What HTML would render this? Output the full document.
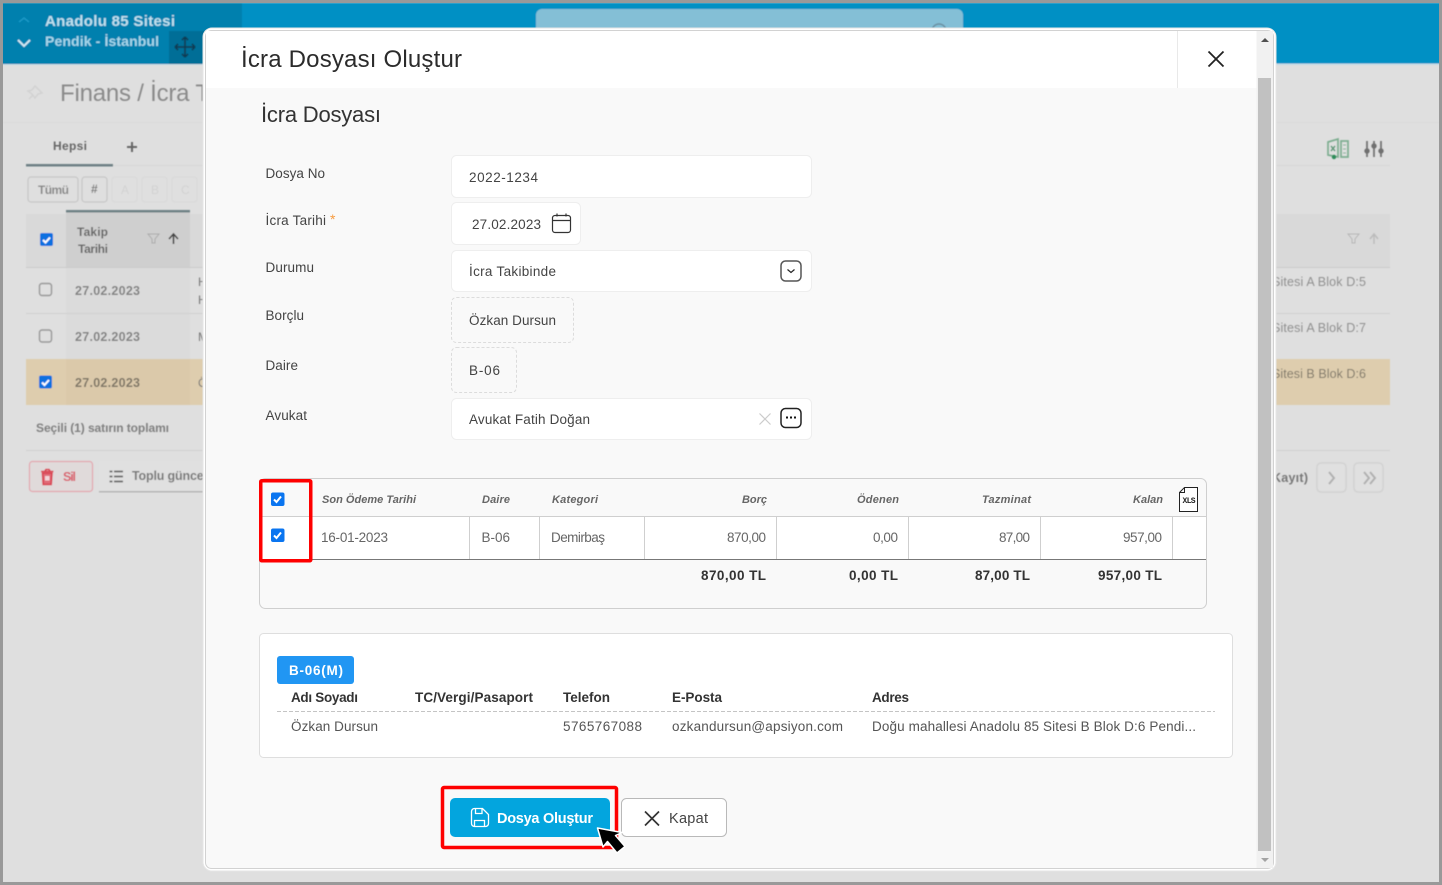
<!DOCTYPE html>
<html><head><meta charset="utf-8"><style>
html,body{margin:0;padding:0;width:1442px;height:885px;overflow:hidden;background:#dfdfdf}
svg{display:block}
text{font-family:"Liberation Sans","DejaVu Sans",sans-serif;font-size:13.5px;fill:#444}
.b{font-weight:bold}
.i{font-style:italic;font-weight:bold;font-size:11px;fill:#666}
.l{fill:#444;font-size:13.5px}
.g{fill:#666;font-size:12px;font-weight:bold}
</style></head><body>
<svg width="1442" height="885" viewBox="0 0 1442 885" xmlns="http://www.w3.org/2000/svg">
<defs><filter id="bl" x="-2%" y="-2%" width="104%" height="104%"><feGaussianBlur stdDeviation="0.6"/></filter></defs>
<rect width="1442" height="885" fill="#dfdfdf"/>
<g filter="url(#bl)">
 <rect x="0" y="3" width="1442" height="61" fill="#0090c4"/>
 <rect x="0" y="63.500" width="1442" height="1.500" fill="#c3dce6"/>
 <rect x="0" y="3" width="242" height="61" fill="#0080ae"/>
 <rect x="169" y="31" width="36" height="33" fill="#006e97"/>
 <rect x="536" y="9" width="427" height="30" rx="6" fill="#84bfd6"/>
 <circle cx="939" cy="31" r="7" fill="none" stroke="#6a8fa0" stroke-width="1.500"/>
 <path d="M19 22l5-4 5 4" fill="none" stroke="#1b98c6" stroke-width="1.500"/>
 <path d="M18 40l6 6 6-6" fill="none" stroke="#cfe7f2" stroke-width="2"/>
 <text x="45" y="26" class="b" style="font-size:15px;fill:#bfe0ee" textLength="130">Anadolu 85 Sitesi</text>
 <text x="45" y="46" class="b" style="font-size:14px;fill:#a6d6ea" textLength="114">Pendik - İstanbul</text>
 <path d="M185 37v20M175 47h20M185 37l-3 3M185 37l3 3M185 57l-3-3M185 57l3-3M175 47l3-3M175 47l3 3M195 47l-3-3M195 47l-3 3" fill="none" stroke="#0c3d55" stroke-width="1.700"/>
 <path d="M35 86l7 7-4 1-3 4-3-4-4-3 4-1z M29 99l4-4" fill="none" stroke="#d2d2d2" stroke-width="1.500"/>
 <text x="60" y="101" style="font-size:24px;fill:#8a8a8a" textLength="150">Finans / İcra T</text>
 <rect x="0" y="122" width="1442" height="1" fill="#dadada"/>
 <rect x="26" y="165" width="1364" height="1" fill="#d6d6d6"/>
 <text x="53" y="150" class="g" textLength="34">Hepsi</text>
 <path d="M132 142v10M127 147h10" stroke="#666" stroke-width="2"/>
 <rect x="26" y="164" width="87" height="2.500" fill="#6e8185"/>
 <g fill="#dfdfdf" stroke="#c6c6c6" stroke-width="1.200">
  <rect x="28" y="177" width="50" height="25" rx="3"/><rect x="82" y="177" width="25" height="25" rx="3"/>
 </g>
 <g fill="none" stroke="#d8d8d8"><rect x="112" y="177" width="25" height="25" rx="3"/><rect x="142" y="177" width="25" height="25" rx="3"/><rect x="172" y="177" width="25" height="25" rx="3"/></g>
 <text x="38" y="194" style="font-size:12px;fill:#888;font-weight:bold" textLength="31">Tümü</text>
 <text x="91" y="193" style="font-size:12px;fill:#777;font-weight:bold">#</text>
 <text x="121" y="194" style="font-size:12px;fill:#d2d2d2">A</text><text x="151" y="194" style="font-size:12px;fill:#d2d2d2">B</text><text x="181" y="194" style="font-size:12px;fill:#d2d2d2">C</text>
 <rect x="26" y="214" width="1364" height="53" fill="#d9d9d9"/>
 <rect x="66" y="212" width="124" height="55" fill="#cfcfcf"/>
 <rect x="66" y="210" width="124" height="2.500" fill="#6e8185"/>
 <rect x="26" y="267" width="1364" height="1" fill="#cacaca"/>
 <rect x="66" y="268" width="124" height="91" fill="#dbdbdb"/>
 <rect x="26" y="313" width="1364" height="1" fill="#d0d0d0"/>
 <rect x="26" y="359" width="1364" height="46" fill="#decdae"/>
 <rect x="66" y="359" width="124" height="46" fill="#dbc9aa"/>
 <rect x="26" y="450" width="1364" height="1" fill="#cfcfcf"/>
 <text x="77" y="236" class="g" textLength="31">Takip</text><text x="78" y="253" class="g" textLength="30">Tarihi</text>
 <path d="M148 234h11l-4 5v4h-3v-4z" fill="none" stroke="#aaa"/>
 <path d="M173.500 244v-9M169 239l4.500-5 4.500 5" fill="none" stroke="#444" stroke-width="1.600"/>
 <path d="M1348 234h11l-4 5v4h-3v-4z" fill="none" stroke="#b5b5b5"/>
 <path d="M1374 244v-9M1370 239l4-5 4 5" fill="none" stroke="#bbb" stroke-width="1.500"/>
 <rect x="40" y="233" width="13" height="13" rx="2" fill="#0f6fe0"/><path d="M43 240l2.500 2.500 4.500-5" fill="none" stroke="#fff" stroke-width="2"/>
 <rect x="39.500" y="283.500" width="12" height="12" rx="2.500" fill="none" stroke="#999" stroke-width="1.400"/>
 <rect x="39.500" y="330" width="12" height="12" rx="2.500" fill="none" stroke="#999" stroke-width="1.400"/>
 <rect x="39" y="375.500" width="13" height="13" rx="2" fill="#0f6fe0"/><path d="M42 382.500l2.500 2.500 4.500-5" fill="none" stroke="#fff" stroke-width="2"/>
 <text x="75" y="295" style="font-size:12.500px;fill:#808080;font-weight:bold" textLength="65">27.02.2023</text>
 <text x="75" y="341" style="font-size:12.500px;fill:#808080;font-weight:bold" textLength="65">27.02.2023</text>
 <text x="75" y="387" style="font-size:12.500px;fill:#7d7565;font-weight:bold" textLength="65">27.02.2023</text>
 <text x="198" y="286" style="font-size:12px;fill:#777">H</text><text x="198" y="304" style="font-size:12px;fill:#777">H</text><text x="198" y="341" style="font-size:12px;fill:#777">M</text><text x="198" y="387" style="font-size:12px;fill:#777">Ö</text>
 <text x="36" y="432" style="font-size:12px;fill:#808080;font-weight:bold" textLength="133">Seçili (1) satırın toplamı</text>
 <rect x="29.500" y="461.500" width="63" height="30" rx="3" fill="#e0dada" stroke="#e3a6ae" stroke-width="1.200"/>
 <path d="M42.500 473h9.500l-.8 11.500h-8z" fill="#e06a77" stroke="#d9414f" stroke-width="1.600"/><path d="M41 471.500h12.500M45 471l1-1.500h3l1 1.500" fill="none" stroke="#d9414f" stroke-width="1.600"/><rect x="45" y="476" width="4.500" height="4.500" fill="#f3d4d8"/>
 <text x="63" y="481" style="font-size:12.500px;fill:#d9606d;font-weight:bold" textLength="13">Sil</text>
 <rect x="99" y="461" width="120" height="30" rx="3" fill="#e0e0e0"/><rect x="99" y="491" width="120" height="1.500" fill="#b5b5b5"/>
 <path d="M114 471.500h9M114 476.500h9M114 481.500h9M109.500 471.500h3M109.500 476.500h3M109.500 481.500h3" stroke="#666" stroke-width="1.800"/>
 <text x="132" y="480" style="font-size:12.500px;fill:#777;font-weight:bold" textLength="75">Toplu güncel</text>
 <g fill="none" stroke="#7eae91" stroke-width="1.700"><path d="M1328 142l10-3v18l-10-2zM1341 141h7v16h-7z"/></g><path d="M1331 146l4 5M1335 146l-4 5" stroke="#5f9676" stroke-width="1.400"/><circle cx="1334" cy="157" r="2.200" fill="#2f8c5a"/><path d="M1343 145h3M1343 149h3M1343 153h3" stroke="#8cb59c"/>
 <path d="M1367 141v16M1374 141v16M1381 141v16" stroke="#6f6f6f" stroke-width="1.700"/><circle cx="1367" cy="151" r="2.700" fill="#6f6f6f"/><circle cx="1374" cy="146" r="2.700" fill="#6f6f6f"/><circle cx="1381" cy="151" r="2.700" fill="#6f6f6f"/>
 <text x="1272" y="286" style="font-size:12.500px;fill:#909090" textLength="94">Sitesi A Blok D:5</text>
 <text x="1272" y="332" style="font-size:12.500px;fill:#909090" textLength="94">Sitesi A Blok D:7</text>
 <text x="1272" y="378" style="font-size:12.500px;fill:#7d7667" textLength="94">Sitesi B Blok D:6</text>
 <text x="1272" y="482" style="font-size:12.500px;fill:#777;font-weight:bold" textLength="36">Kayıt)</text>
 <g fill="#e0e0e0" stroke="#d2d2d2" stroke-width="1.500"><rect x="1317" y="463" width="29" height="29" rx="4"/><rect x="1354" y="463" width="29" height="29" rx="4"/></g>
 <path d="M1329 472l5 6-5 6" fill="none" stroke="#b0b0b0" stroke-width="2"/>
 <path d="M1364 472l5 6-5 6M1370 472l5 6-5 6" fill="none" stroke="#b0b0b0" stroke-width="2"/>
</g>
<path d="M0 0H1442V885H0zM3 3V882H1439V3z" fill="#999" fill-rule="evenodd"/>

<!-- modal -->
<rect x="203" y="28" width="1073" height="843" rx="9" fill="#fff" stroke="#e6e6e6" stroke-width="1"/>
<rect x="205.500" y="30.500" width="1068" height="838" rx="6" fill="#f9f9f9" stroke="#d2d2d2" stroke-width="1"/>
<rect x="206" y="31" width="1051" height="57" fill="#fff"/>
<rect x="1177" y="31" width="1" height="57" fill="#e9e9e9"/>
<rect x="1256.500" y="31" width="16.500" height="837" fill="#f1f1f1"/>
<rect x="1258" y="78" width="13" height="773" fill="#c1c1c1"/>
<path d="M1261 42h8l-4-4z" fill="#505050"/><path d="M1261 858h8l-4 4z" fill="#a3a3a3"/>
<text x="241" y="67" style="font-size:24px;fill:#2b2b2b" textLength="221">İcra Dosyası Oluştur</text>
<path d="M1208.500 51.500l15 15M1223.500 51.500l-15 15" stroke="#222" stroke-width="1.800"/>
<text x="261" y="122" style="font-size:22px;fill:#333" textLength="120">İcra Dosyası</text>

<text x="265.500" y="178" class="l" textLength="59.500">Dosya No</text>
<text x="265.500" y="225" class="l" textLength="60.500">İcra Tarihi</text><text x="330" y="224" style="font-size:14px;fill:#f79b3f">*</text>
<text x="265.500" y="272" class="l" textLength="48.500">Durumu</text>
<text x="265.500" y="320" class="l" textLength="38.500">Borçlu</text>
<text x="265.500" y="370" class="l" textLength="32.500">Daire</text>
<text x="265.500" y="420" class="l" textLength="41.500">Avukat</text>

<g fill="#fff" stroke="#eeeeee" stroke-width="1">
<rect x="451.500" y="155.500" width="360" height="42" rx="5"/>
<rect x="451.500" y="202.500" width="129" height="42" rx="5"/>
<rect x="451.500" y="250.500" width="360" height="41" rx="5"/>
<rect x="451.500" y="398.500" width="360" height="41" rx="5"/>
</g>
<g fill="none" stroke="#dcdcdc" stroke-width="1" stroke-dasharray="3 2">
<rect x="451.500" y="297.500" width="122" height="45" rx="5"/>
<rect x="451.500" y="347.500" width="65" height="45" rx="5"/>
</g>
<text x="469" y="182" class="l" textLength="69">2022-1234</text>
<text x="472" y="229" class="l" textLength="69">27.02.2023</text>
<text x="469" y="276" class="l" textLength="87">İcra Takibinde</text>
<text x="469" y="325" class="l" textLength="87">Özkan Dursun</text>
<text x="469" y="375" class="l" textLength="31">B-06</text>
<text x="469" y="424" class="l" textLength="121">Avukat Fatih Doğan</text>
<rect x="552.500" y="215.500" width="18" height="17" rx="2.500" fill="none" stroke="#333" stroke-width="1.200"/><path d="M552.500 220.500h18M557 213.500v3M566 213.500v3" stroke="#333" stroke-width="1.200"/>
<rect x="781" y="261" width="20" height="20" rx="4.500" fill="#fff" stroke="#555" stroke-width="1.500"/><path d="M787.500 269.500l3.500 3 3.500-3" fill="none" stroke="#222" stroke-width="1.200"/>
<path d="M759.500 413.500l11 11M770.500 413.500l-11 11" stroke="#ccc" stroke-width="1.200"/>
<rect x="781" y="408.500" width="20" height="19" rx="4.500" fill="#fff" stroke="#222" stroke-width="1.500"/><path d="M786 417.500h2M790 417.500h2M794 417.500h2" stroke="#111" stroke-width="2"/>

<!-- table -->
<rect x="259.500" y="478.500" width="947" height="130" rx="6" fill="#f9f9f9" stroke="#cfcfcf"/>
<rect x="260" y="517" width="946" height="42" fill="#fff"/>
<rect x="260" y="516" width="946" height="1" fill="#cfcfcf"/>
<rect x="260" y="559" width="946" height="1" fill="#777"/>
<g fill="#cfcfcf"><rect x="469" y="517" width="1" height="42"/><rect x="539" y="517" width="1" height="42"/><rect x="644" y="517" width="1" height="42"/><rect x="776" y="517" width="1" height="42"/><rect x="908" y="517" width="1" height="42"/><rect x="1040" y="517" width="1" height="42"/><rect x="1172" y="517" width="1" height="42"/></g>
<text x="322" y="503" class="i" textLength="94">Son Ödeme Tarihi</text>
<text x="482" y="503" class="i" textLength="28">Daire</text>
<text x="552" y="503" class="i" textLength="46">Kategori</text>
<text x="742" y="503" class="i" textLength="25">Borç</text>
<text x="857" y="503" class="i" textLength="42">Ödenen</text>
<text x="982" y="503" class="i" textLength="49">Tazminat</text>
<text x="1133" y="503" class="i" textLength="30">Kalan</text>
<text x="321" y="542" style="fill:#666" textLength="67">16-01-2023</text>
<text x="481.500" y="542" style="fill:#666" textLength="28.500">B-06</text>
<text x="551" y="542" style="fill:#666" textLength="54">Demirbaş</text>
<text x="727" y="542" style="fill:#666" textLength="39">870,00</text>
<text x="873" y="542" style="fill:#666" textLength="25">0,00</text>
<text x="999" y="542" style="fill:#666" textLength="31">87,00</text>
<text x="1123" y="542" style="fill:#666" textLength="39">957,00</text>
<text x="701" y="580" class="b" style="fill:#333" textLength="65">870,00 TL</text>
<text x="849" y="580" class="b" style="fill:#333" textLength="49">0,00 TL</text>
<text x="975" y="580" class="b" style="fill:#333" textLength="55">87,00 TL</text>
<text x="1098" y="580" class="b" style="fill:#333" textLength="64">957,00 TL</text>
<path d="M1184.500 487.500h13v24h-18v-19zM1184.500 487.500v5h-5" fill="#fff" stroke="#222" stroke-width="1"/>
<text x="1182.500" y="503" style="font-size:8px;font-weight:bold;fill:#222;font-family:'Liberation Mono',monospace" textLength="13">XLS</text>
<rect x="260.750" y="480.750" width="50" height="80" fill="none" stroke="#fe0000" stroke-width="3.500" rx="1"/>
<rect x="271" y="492.500" width="13.500" height="13.500" rx="2" fill="#0a75f0"/><path d="M274 499.500l2.500 2.500 4.500-5.500" fill="none" stroke="#fff" stroke-width="2"/>
<rect x="271" y="528.500" width="13.500" height="13.500" rx="2" fill="#0a75f0"/><path d="M274 535.500l2.500 2.500 4.500-5.500" fill="none" stroke="#fff" stroke-width="2"/>

<!-- owner -->
<rect x="259.500" y="633.500" width="973" height="124" rx="4" fill="#fff" stroke="#dedede"/>
<rect x="277" y="656" width="77" height="28" rx="3" fill="#2196f3"/>
<text x="289" y="675" class="b" style="fill:#fff" textLength="54">B-06(M)</text>
<text x="291" y="702" class="b" style="fill:#333" textLength="67">Adı Soyadı</text>
<text x="415" y="702" class="b" style="fill:#333" textLength="118">TC/Vergi/Pasaport</text>
<text x="563" y="702" class="b" style="fill:#333" textLength="47">Telefon</text>
<text x="672" y="702" class="b" style="fill:#333" textLength="50">E-Posta</text>
<text x="872" y="702" class="b" style="fill:#333" textLength="37">Adres</text>
<path d="M277 711.500H1215" stroke="#c4c4c4" stroke-dasharray="4 2"/>
<text x="291" y="731" style="fill:#555" textLength="87">Özkan Dursun</text>
<text x="563" y="731" style="fill:#555" textLength="79">5765767088</text>
<text x="672" y="731" style="fill:#555" textLength="171">ozkandursun@apsiyon.com</text>
<text x="872" y="731" style="fill:#555" textLength="324">Doğu mahallesi Anadolu 85 Sitesi B Blok D:6 Pendi...</text>

<!-- buttons -->
<rect x="442.500" y="787.500" width="174" height="60" rx="1.500" fill="#f9f9f9" stroke="#fe0000" stroke-width="3.500"/>
<rect x="450" y="798" width="160" height="39" rx="5" fill="#03a5de"/>
<path d="M474.500 808.500h8l6 6v9a3 3 0 0 1-3 3h-11a3 3 0 0 1-3-3v-12a3 3 0 0 1 3-3zM475.500 808.500v5h6.500v-5M474.500 826.500v-6h10v6" fill="none" stroke="#fff" stroke-width="1.300"/>
<text x="497" y="823" class="b" style="font-size:14.500px;fill:#fff" textLength="96">Dosya Oluştur</text>
<rect x="621.500" y="798.500" width="105" height="38" rx="5" fill="#fff" stroke="#b9b9b9"/>
<path d="M645 811.500l14 14M659 811.500l-14 14" stroke="#333" stroke-width="1.700"/>
<text x="669" y="823" style="font-size:14.500px;fill:#444" textLength="39">Kapat</text>
<path d="M597.500 828l5.500 19 4.500-5.500 9.500 11.500 8-6.500-9.500-11 6.500-3z" fill="#000" stroke="#fff" stroke-width="1.500" stroke-linejoin="round"/>
</svg>
</body></html>
